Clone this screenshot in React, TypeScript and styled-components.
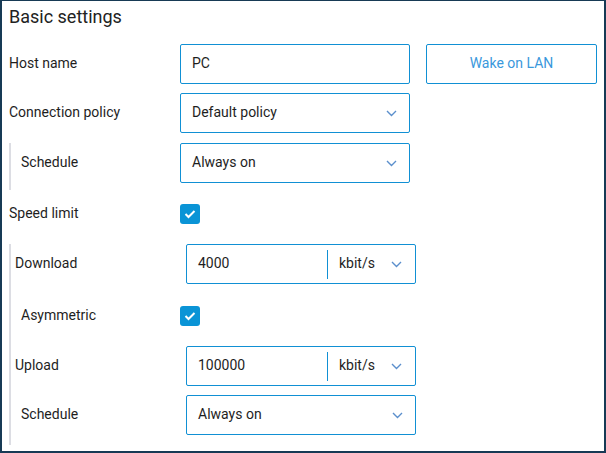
import React from "react";
import styled, { createGlobalStyle } from "styled-components";

const GlobalStyle = createGlobalStyle`
  html, body { margin: 0; padding: 0; background: #ffffff; }
  body { font-family: Roboto, "Noto Sans", Arial, sans-serif; }
  * { box-sizing: border-box; }
`;

const Frame = styled.div`
  width: 606px;
  height: 453px;
  border: 2px solid #173a55;
  border-top-width: 1px;
  background: #ffffff;
  padding: 5px 0 0 7px;
  overflow: hidden;
`;

const Title = styled.h2`
  margin: 0;
  font-size: 18px;
  line-height: 21px;
  font-weight: 400;
  color: #222222;
`;

const Form = styled.div`
  margin-top: 17px;
  display: flex;
  flex-direction: column;
`;

const Row = styled.div<{ $mb?: number }>`
  display: flex;
  align-items: center;
  height: 40px;
  margin-bottom: ${(p) => (p.$mb ?? 10)}px;
`;

const Label = styled.div<{ $w: number; $ml?: number }>`
  width: ${(p) => p.$w}px;
  margin-left: ${(p) => p.$ml ?? 0}px;
  flex: none;
  font-size: 14px;
  color: #1e1e1e;
  padding-bottom: 2px;
`;

const Group = styled.div<{ $pl: number; $pb: number; $mb: number }>`
  border-left: 2px solid #dcdde3;
  padding-left: ${(p) => p.$pl}px;
  padding-bottom: ${(p) => p.$pb}px;
  margin-bottom: ${(p) => p.$mb}px;
  display: flex;
  flex-direction: column;
`;

const Box = styled.div`
  width: 230px;
  height: 40px;
  border: 1px solid #1190d4;
  border-radius: 2px;
  display: flex;
  align-items: center;
  padding: 0 12px 2px 11px;
  font-size: 14px;
  color: #1e1e1e;
  background: #ffffff;
`;

const BoxText = styled.span`
  flex: 1;
`;

const Divider = styled.span`
  width: 1px;
  height: 29px;
  margin-top: 2px;
  background: #1190d4;
  margin-right: 11px;
`;

const UnitText = styled.span`
  flex: 1;
`;

const ValueCell = styled.span`
  width: 129px;
`;

const WakeButton = styled.button`
  margin-left: 16px;
  width: 171px;
  height: 40px;
  border: 1px solid #1190d4;
  border-radius: 2px;
  background: #ffffff;
  color: #3a98dc;
  font-family: inherit;
  font-size: 14px;
  padding: 0 0 2px 0;
`;

const Check = styled.span`
  width: 20px;
  height: 20px;
  border-radius: 3px;
  background: #0a94d6;
  display: flex;
  align-items: center;
  justify-content: center;
`;

const ChevronSvg = styled.svg<{ $mr: number }>`
  flex: none;
  margin-top: 3px;
  margin-right: ${(p) => p.$mr}px;
`;

const Chevron = ({ mr = 0 }: { mr?: number }) => (
  <ChevronSvg $mr={mr} width="11" height="7" viewBox="0 0 11 7">
    <path d="M1 1 L5.5 5.5 L10 1" fill="none" stroke="#5b8fcc" strokeWidth="1.4" />
  </ChevronSvg>
);

const CheckBox = () => (
  <Check>
    <svg width="12" height="10" viewBox="0 0 12 10">
      <path d="M1.5 5 L4.5 8 L10.5 2" fill="none" stroke="#ffffff" strokeWidth="2" />
    </svg>
  </Check>
);

const Select = ({ value }: { value: string }) => (
  <Box>
    <BoxText>{value}</BoxText>
    <Chevron />
  </Box>
);

const UnitBox = ({ value }: { value: string }) => (
  <Box>
    <ValueCell>{value}</ValueCell>
    <Divider />
    <UnitText>kbit/s</UnitText>
    <Chevron mr={1} />
  </Box>
);

export default function App() {
  return (
    <>
      <GlobalStyle />
      <Frame>
        <Title>Basic settings</Title>
        <Form>
          <Row $mb={9}>
            <Label $w={171}>Host name</Label>
            <Box>
              <BoxText>PC</BoxText>
            </Box>
            <WakeButton>Wake on LAN</WakeButton>
          </Row>
          <Row $mb={10}>
            <Label $w={171}>Connection policy</Label>
            <Select value="Default policy" />
          </Row>
          <Group $pl={10} $pb={7} $mb={4}>
            <Row $mb={0}>
              <Label $w={159}>Schedule</Label>
              <Select value="Always on" />
            </Row>
          </Group>
          <Row $mb={10}>
            <Label $w={171}>Speed limit</Label>
            <CheckBox />
          </Row>
          <Group $pl={4} $pb={10} $mb={0}>
            <Row $mb={12}>
              <Label $w={171}>Download</Label>
              <UnitBox value="4000" />
            </Row>
            <Row $mb={10}>
              <Label $w={159} $ml={6}>Asymmetric</Label>
              <CheckBox />
            </Row>
            <Row $mb={9}>
              <Label $w={171}>Upload</Label>
              <UnitBox value="100000" />
            </Row>
            <Row $mb={0}>
              <Label $w={165} $ml={6}>Schedule</Label>
              <Select value="Always on" />
            </Row>
          </Group>
        </Form>
      </Frame>
    </>
  );
}
